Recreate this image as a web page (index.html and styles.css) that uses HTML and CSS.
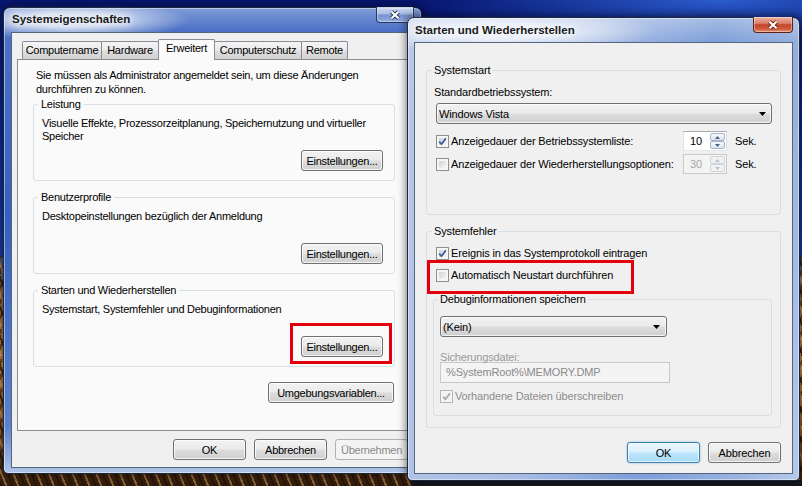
FILE: index.html
```html
<!DOCTYPE html>
<html lang="de">
<head>
<meta charset="utf-8">
<title>Systemeigenschaften</title>
<link rel="stylesheet" href="styles.css">
</head>
<body>
<section class="win win-left">
  <header class="titlebar">
    <span class="title">Systemeigenschaften</span>
    <span class="close close-inactive"><svg width="12" height="10" viewBox="0 0 12 10"><path class="x-out" d="M2.5 1.8L9.5 8.2M9.5 1.8L2.5 8.2"/><path class="x-in" d="M2.5 1.8L9.5 8.2M9.5 1.8L2.5 8.2"/></svg></span>
  </header>
  <div class="client client-left">
    <div class="tabs">
      <span class="tab tab-name">Computername</span>
      <span class="tab tab-hw">Hardware</span>
      <span class="tab tab-adv active">Erweitert</span>
      <span class="tab tab-prot">Computerschutz</span>
      <span class="tab tab-rem">Remote</span>
    </div>
    <div class="tabpanel">
      <p class="intro">Sie müssen als Administrator angemeldet sein, um diese Änderungen<br>durchführen zu können.</p>
      <fieldset class="grp">
        <legend>Leistung</legend>
        <p class="desc">Visuelle Effekte, Prozessorzeitplanung, Speichernutzung und virtueller<br>Speicher</p>
        <div class="btnrow"><button class="btn btn-einst">Einstellungen...</button></div>
      </fieldset>
      <fieldset class="grp">
        <legend>Benutzerprofile</legend>
        <p class="desc">Desktopeinstellungen bezüglich der Anmeldung</p>
        <div class="btnrow"><button class="btn btn-einst">Einstellungen...</button></div>
      </fieldset>
      <fieldset class="grp">
        <legend>Starten und Wiederherstellen</legend>
        <p class="desc">Systemstart, Systemfehler und Debuginformationen</p>
        <div class="btnrow"><span class="mark mark-btn"><button class="btn btn-einst">Einstellungen...</button></span></div>
      </fieldset>
      <div class="btnrow env-row"><button class="btn btn-env">Umgebungsvariablen...</button></div>
    </div>
    <div class="dlgbtns">
      <button class="btn btn-dlg">OK</button>
      <button class="btn btn-dlg">Abbrechen</button>
      <button class="btn btn-dlg disabled">Übernehmen</button>
    </div>
  </div>
</section>

<section class="win win-right">
  <header class="titlebar">
    <span class="title">Starten und Wiederherstellen</span>
    <span class="close close-active"><svg width="12" height="10" viewBox="0 0 12 10"><path class="x-out red" d="M2.5 1.8L9.5 8.2M9.5 1.8L2.5 8.2"/><path class="x-in" d="M2.5 1.8L9.5 8.2M9.5 1.8L2.5 8.2"/></svg></span>
  </header>
  <div class="client client-right">
    <fieldset class="grp2 sys">
      <legend>Systemstart</legend>
      <div class="line">Standardbetriebssystem:</div>
      <div class="combo combo-os"><span>Windows Vista</span><svg width="7" height="4" viewBox="0 0 7 4"><path d="M0 0h7L3.5 4z"/></svg></div>
      <div class="opt-row first">
        <label class="opt lbl-wide"><span class="cb checked"><svg viewBox="0 0 11 11"><path d="M2.2 5.6l2.2 2.6L8.9 2.4"/></svg></span><span>Anzeigedauer der Betriebssystemliste:</span></label>
        <div class="spin"><span class="spin-val">10</span><span class="spin-btns"><span class="sb"><svg width="5" height="3" viewBox="0 0 5 3"><path d="M0 3h5L2.5 0z"/></svg></span><span class="sb"><svg width="5" height="3" viewBox="0 0 5 3"><path d="M0 0h5L2.5 3z"/></svg></span></span></div>
        <span class="unit">Sek.</span>
      </div>
      <div class="opt-row second">
        <label class="opt lbl-wide"><span class="cb"></span><span>Anzeigedauer der Wiederherstellungsoptionen:</span></label>
        <div class="spin off"><span class="spin-val">30</span><span class="spin-btns"><span class="sb"><svg width="5" height="3" viewBox="0 0 5 3"><path d="M0 3h5L2.5 0z"/></svg></span><span class="sb"><svg width="5" height="3" viewBox="0 0 5 3"><path d="M0 0h5L2.5 3z"/></svg></span></span></div>
        <span class="unit">Sek.</span>
      </div>
    </fieldset>

    <fieldset class="grp2 err">
      <legend>Systemfehler</legend>
      <label class="opt row14"><span class="cb checked"><svg viewBox="0 0 11 11"><path d="M2.2 5.6l2.2 2.6L8.9 2.4"/></svg></span><span>Ereignis in das Systemprotokoll eintragen</span></label>
      <label class="opt row14 row-auto mark mark-row"><span class="cb"></span><span>Automatisch Neustart durchführen</span></label>
      <fieldset class="grp3">
        <legend>Debuginformationen speichern</legend>
        <div class="combo combo-dbg"><span>(Kein)</span><svg width="7" height="4" viewBox="0 0 7 4"><path d="M0 0h7L3.5 4z"/></svg></div>
        <div class="file-label">Sicherungsdatei:</div>
        <div class="textbox">%SystemRoot%\MEMORY.DMP</div>
        <label class="opt row14 row-over off"><span class="cb checked off"><svg viewBox="0 0 11 11"><path d="M2.2 5.6l2.2 2.6L8.9 2.4"/></svg></span><span>Vorhandene Dateien überschreiben</span></label>
      </fieldset>
    </fieldset>

    <div class="dlgbtns-r">
      <button class="btn btn-dlg focus">OK</button>
      <button class="btn btn-dlg">Abbrechen</button>
    </div>
  </div>
</section>
</body>
</html>
```

FILE: styles.css
```css
* { box-sizing: border-box; }
html, body { margin: 0; padding: 0; }
body {
  width: 802px;
  height: 486px;
  overflow: hidden;
  position: relative;
  font-family: "Liberation Sans", Arial, sans-serif;
  font-size: 11px;
  color: #000;
  background:
    linear-gradient(90deg, rgba(0,0,0,0) 0 412px, #16181f 412px) 0 100% / 100% 6px no-repeat,
    repeating-linear-gradient(68deg, rgba(35,18,6,.75) 0 2px, rgba(0,0,0,0) 2px 5px, rgba(255,196,120,.4) 5px 7px, rgba(0,0,0,0) 7px 11px) 0 100% / 100% 230px no-repeat,
    repeating-linear-gradient(-58deg, rgba(60,28,8,.55) 0 3px, rgba(0,0,0,0) 3px 8px) 0 100% / 100% 230px no-repeat,
    linear-gradient(180deg, #4a5a80 0, #8b6740 15%, #c88a44 45%, #a0622a 75%, #2c1a0c 100%) 0 100% / 100% 230px no-repeat,
    radial-gradient(ellipse 300px 40px at 720px 0, #2b5ccc, rgba(43,92,204,0)),
    linear-gradient(180deg, #071670 0, #0c2792 120px, #1b3da6 256px);
}

/* ---------- windows ---------- */
.win {
  position: absolute;
  display: flex;
  flex-direction: column;
  border: 1px solid #1c263f;
  border-radius: 7px 7px 5px 5px;
  box-shadow: inset 0 0 0 1px rgba(255,255,255,.45), 0 0 9px 1px rgba(0,0,0,.55);
}
.win-left {
  left: 3px;
  top: 7px;
  width: 419px;
  height: 467px;
  padding: 0 7px 5px;
  background:
    radial-gradient(ellipse 120px 20px at 66px 12px, rgba(214,224,242,.97) 35%, rgba(214,224,242,0) 100%),
    linear-gradient(180deg, rgba(255,255,255,.28) 0, rgba(255,255,255,0) 22px),
    linear-gradient(180deg, #4f74c7 0, #3460bf 45%, #5b82cc 90%, #b1c6e8 100%);
}
.win-right {
  left: 407px;
  top: 17px;
  width: 393px;
  height: 464px;
  padding: 0 6px 6px;
  background:
    radial-gradient(ellipse 160px 22px at 88px 13px, rgba(236,241,250,.97) 35%, rgba(236,241,250,0) 100%),
    linear-gradient(180deg, rgba(255,255,255,.3) 0, rgba(255,255,255,0) 24px),
    linear-gradient(100deg, #b7c8e7 0%, #a8bde4 40%, #7d9ed8 66%, #98b2df 86%, #b6c9ea 100%);
}

.titlebar {
  height: 24px;
  flex: none;
  display: flex;
  align-items: center;
  justify-content: space-between;
}
.win-left .titlebar { padding-bottom: 2px; }
.title {
  margin-left: 1px;
  font-size: 11.5px;
  font-weight: bold;
  color: #1a1a1a;
  text-shadow: 0 0 6px #fff, 0 0 10px #fff, 0 0 14px rgba(255,255,255,.9);
}
.close {
  align-self: flex-start;
  margin-top: -1px;
  height: 16px;
  display: grid;
  place-items: center;
  border-radius: 0 0 4px 4px;
}
.close-active {
  width: 40px;
  border: 1px solid #5e2216;
  border-top: none;
  background: linear-gradient(180deg, #eeb3a4 0%, #d9806a 42%, #c2452b 52%, #cf5a3d 78%, #e58d6c 100%);
  box-shadow: inset 0 0 0 1px rgba(255,255,255,.4);
}
.close-inactive {
  width: 38px;
  border: 1px solid #27375c;
  border-top: none;
  background: linear-gradient(180deg, rgba(235,240,250,.75) 0%, rgba(200,214,238,.6) 48%, rgba(120,150,205,.55) 52%, rgba(170,192,230,.7) 100%);
  box-shadow: inset 0 0 0 1px rgba(255,255,255,.35);
}
.x-out { fill: none; stroke: #2b3550; stroke-width: 4; }
.x-out.red { stroke: #6b2415; }
.x-in { fill: none; stroke: #fff; stroke-width: 2.2; }

.client {
  border: 1px solid #56657f;
  background: #f0f0f0;
}
.client-left { height: 436px; }
.client-right { height: 432px; letter-spacing: -0.15px; }

/* ---------- buttons ---------- */
.btn {
  height: 21px;
  padding: 0;
  font: inherit;
  letter-spacing: inherit;
  color: #000;
  border: 1px solid #707070;
  border-radius: 3px;
  background: linear-gradient(180deg, #f2f2f2 0%, #ebebeb 48%, #dddddd 52%, #cfcfcf 100%);
  box-shadow: inset 0 0 0 1px rgba(255,255,255,.75);
  text-align: center;
}
.btn.focus {
  border-color: #3c7fb1;
  background: linear-gradient(180deg, #eaf6fd 0%, #d9f0fc 48%, #bee6fd 52%, #a7d9f5 100%);
  box-shadow: inset 0 0 0 1px rgba(255,255,255,.7), 0 0 2px rgba(60,127,177,.6);
}
.btn.disabled {
  color: #8a8a8a;
  border-color: #adb2b5;
  background: #f4f4f4;
  box-shadow: none;
}
.btn-einst { width: 82px; }
.btn-env { width: 126px; }
.btn-dlg { width: 73px; }

/* ---------- left dialog ---------- */
.client-left { letter-spacing: -0.26px; }
.tabs {
  display: flex;
  align-items: flex-end;
  height: 20px;
  margin: 6px 0 0 10px;
}
.tab {
  height: 18px;
  padding: 0;
  text-align: center;
  line-height: 17px;
  margin-left: -1px;
  border: 1px solid #898c95;
  border-bottom: none;
  border-radius: 2px 2px 0 0;
  background: linear-gradient(180deg, #f4f4f4 0%, #ebebeb 48%, #dedede 52%, #d2d2d2 100%);
}
.tab:first-child { margin-left: 0; }
.tab-name { width: 80px; }
.tab-hw { width: 58px; }
.tab-adv { width: 57px; }
.tab-prot { width: 88px; }
.tab-rem { width: 47px; }
.tab.active {
  height: 21px;
  margin-bottom: -1px;
  line-height: 17px;
  background: #fafafa;
  position: relative;
  z-index: 1;
}
.tabpanel {
  margin: 0 5px;
  height: 372px;
  border: 1px solid #898c95;
  background: #fafafa;
  padding: 0 12px 0 15px;
}
.intro {
  margin: 8px 0 0 3px;
  line-height: 14px;
}
.grp {
  margin: 1px 0 0;
  padding: 6px 11px 9px 8px;
  border: 1px solid #d5dfe5;
  border-radius: 3px;
  min-width: 0;
}
.grp + .grp { margin-top: 9px; }
.grp legend {
  padding: 0 3px;
  margin-left: -4px;
  line-height: 14px;
}
.desc {
  margin: 0;
  height: 26px;
  line-height: 13px;
}
.btnrow {
  display: flex;
  justify-content: flex-end;
  margin-top: 7px;
}
.env-row { margin-top: 15px; margin-right: 1px; }
.dlgbtns {
  display: flex;
  justify-content: flex-end;
  gap: 8px;
  margin: 8px 5px 0 0;
}

/* red annotation frames */
.mark { position: relative; }
.mark-btn { display: block; height: 21px; }
.mark::after {
  content: "";
  position: absolute;
  border: 3px solid #e2000c;
  pointer-events: none;
}
.mark-btn::after { left: -11px; right: -9px; top: -13px; bottom: -7px; }
.mark-row::after { left: -7px; width: 201px; top: -8px; height: 28px; }

/* ---------- right dialog ---------- */
.grp2 {
  margin: 20px 11px 0;
  padding: 8px 8px 40px 7px;
  border: 1px solid #d5dfe5;
  border-radius: 3px;
  min-width: 0;
}
.grp2.err { margin-top: 9px; padding: 8px 8px 11px 7px; }
.grp2 legend, .grp3 legend {
  padding: 0 2px;
  margin-left: -2px;
  line-height: 14px;
}
.line { line-height: 14px; }
.combo {
  height: 21px;
  display: flex;
  align-items: center;
  justify-content: space-between;
  border: 1px solid #707070;
  border-radius: 3px;
  background: linear-gradient(180deg, #f2f2f2 0%, #ebebeb 48%, #dddddd 52%, #cfcfcf 100%);
  box-shadow: inset 0 0 0 1px rgba(255,255,255,.75);
  padding: 0 5px 0 2px;
}
.combo svg path { fill: #000; }
.combo-os { width: 336px; margin: 4px 0 0 2px; }
.combo-dbg { width: 227px; padding-right: 6px; }

.opt-row {
  display: flex;
  align-items: center;
  height: 20px;
}
.opt-row.first { margin-top: 7px; }
.opt-row.second { margin-top: 3px; }
.opt {
  display: flex;
  align-items: center;
  gap: 2px;
}
.lbl-wide { width: 249px; }
.lbl-wide .cb, .row14 > .cb { margin-left: 2px; }
.row-over > .cb { margin-left: 0; }
.row14 { height: 14px; }
.row-auto { margin-top: 8px; }
.unit { margin-left: 8px; }

.cb {
  flex: none;
  width: 13px;
  height: 13px;
  border: 1px solid #8f8f8f;
  background: linear-gradient(135deg, #cdd0d5, #f7f7f7) 2px 2px / 7px 7px no-repeat, #f6f6f6;
  display: block;
}
.cb svg { display: block; width: 11px; height: 11px; }
.cb svg path { fill: none; stroke: #41609f; stroke-width: 1.8; stroke-linejoin: round; }
.cb.off { border-color: #b5b5b5; background: #f4f4f4; }
.cb.off svg path { stroke: #a9a9a9; }
.off > span:last-child { color: #8d8d8d; }

.spin {
  display: flex;
  width: 44px;
  height: 20px;
  border: 1px solid;
  border-color: #abadb3 #dbdfe6 #e3e9ef #e2e3ea;
  background: #fff;
}
.spin-val { flex: 1; padding-left: 6px; line-height: 18px; }
.spin-btns {
  width: 16px;
  display: flex;
  flex-direction: column;
  padding: 1px 1px 1px 0;
}
.sb {
  flex: 1;
  display: grid;
  place-items: center;
  border: 1px solid #a7b6cd;
  border-radius: 2px;
  background: linear-gradient(180deg, #f7f9fb, #dbe3ec);
}
.sb svg path { fill: #4d6185; }
.spin.off { background: #f4f4f4; border-color: #c9c9c9; color: #a6a6a6; }
.spin.off .sb { border-color: #cfd4da; background: #f1f1f1; }
.spin.off .sb svg path { fill: #b8c0cc; }

.grp3 {
  margin: 10px 0 0 -1px;
  padding: 10px 8px 12px 6px;
  border: 1px solid #d5dfe5;
  border-radius: 3px;
  min-width: 0;
}
.file-label {
  margin-top: 14px;
  line-height: 12px;
  color: #9a9a9a;
}
.textbox {
  width: 230px;
  height: 21px;
  margin-top: -1px;
  padding-left: 5px;
  line-height: 19px;
  border: 1px solid #c6c9cc;
  background: #f4f4f4;
  color: #8a8a8a;
}
.row-over { margin-top: 6px; }

.dlgbtns-r {
  display: flex;
  justify-content: flex-end;
  gap: 8px;
  margin: 14px 11px 0 0;
}
```
